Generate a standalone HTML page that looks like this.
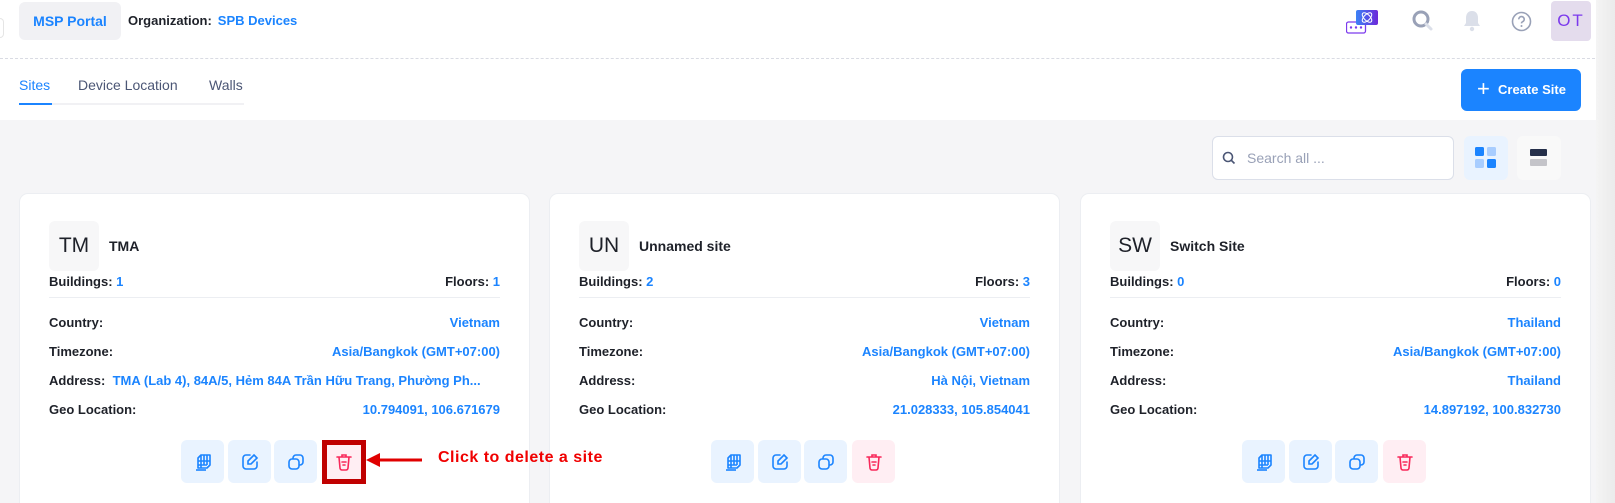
<!DOCTYPE html>
<html><head><meta charset="utf-8"><style>
*{box-sizing:border-box;margin:0;padding:0}
html{width:1615px;height:503px;overflow:hidden}
body{width:1615px;height:503px;overflow:hidden;background:#f5f5f7;font-family:"Liberation Sans",sans-serif;position:relative;color:#1e2129}
.hdr{position:absolute;left:0;top:0;width:1615px;height:120px;background:#fff}
.dash{position:absolute;left:0;top:58px;width:1600px;border-top:1px dashed #d9dbe3}
.msp{position:absolute;left:19px;top:2px;width:102px;height:38px;background:#f1f1f4;border-radius:6px;color:#1b84ff;font-weight:bold;font-size:14px;line-height:38px;text-align:center}
.org{position:absolute;left:128px;top:13px;font-size:13px;font-weight:bold}
.org span{color:#1b84ff;margin-left:6px}
.tab{position:absolute;top:77px;font-size:14px;color:#4b5675}
.tabline{position:absolute;left:19px;top:103px;width:225px;height:2px;background:#f1f1f4}
.tabact{position:absolute;left:19px;top:103px;width:33px;height:2px;background:#1b84ff}
.create{position:absolute;left:1461px;top:69px;width:120px;height:42px;background:#1b84ff;border-radius:6px;color:#fff;font-weight:bold;font-size:13px;line-height:42px;padding-left:37px}
.create:before{content:"+";position:absolute;left:16px;top:-1px;font-size:22px;font-weight:normal}
.avatar{position:absolute;left:1551px;top:1px;width:40px;height:40px;background:#e4dced;border-radius:4px;color:#7c3aed;font-size:17px;line-height:40px;text-align:center;letter-spacing:2px}
.search{position:absolute;left:1212px;top:136px;width:242px;height:44px;background:#fff;border:1px solid #dbdfe9;border-radius:6px;font-size:14px;color:#99a1b7;line-height:42px;padding-left:34px}
.vb{position:absolute;top:136px;width:44px;height:44px;border-radius:6px}
.card{position:absolute;top:193px;width:511px;height:310px;background:#fff;border:1px solid #eceef2;border-bottom:none;border-radius:9px 9px 0 0}
.av{position:absolute;left:29px;top:27px;width:50px;height:50px;background:#f7f7f8;border-radius:6px;font-size:21px;line-height:50px;text-align:center;color:#1e2129}
.name{position:absolute;left:89px;top:44px;font-size:14px;font-weight:bold}
.row{position:absolute;left:29px;right:29px;font-size:13px;font-weight:bold;display:flex;justify-content:space-between;white-space:nowrap}
.row b{color:#1b84ff}
.hr{position:absolute;left:29px;right:29px;top:103px;border-top:1px solid #eceef2}
.btn{position:absolute;top:440px;width:43px;height:43px;border-radius:6px;background:#e9f3ff;display:flex;align-items:center;justify-content:center}
.btn.del{background:#ffeef3}
</style></head><body>
<div class="hdr"></div>
<div style="position:absolute;left:0;top:18px;width:4px;height:20px;border:1px solid #e5e5e5;border-left:none;border-radius:0 4px 4px 0"></div>
<div class="dash"></div>
<div class="msp">MSP Portal</div>
<div class="org">Organization:<span>SPB Devices</span></div>
<div class="tab" style="left:19px;color:#1b84ff">Sites</div>
<div class="tab" style="left:78px">Device Location</div>
<div class="tab" style="left:209px">Walls</div>
<div class="tabline"></div><div class="tabact"></div>
<svg style="position:absolute;left:1346px;top:10px" width="34" height="28" viewBox="0 0 34 28"><rect x="0.5" y="12" width="19" height="11" rx="2" fill="#fff" stroke="#7c3aed" stroke-width="1.3"/><circle cx="5" cy="17.5" r="1.2" fill="#7c3aed"/><circle cx="10" cy="17.5" r="1.2" fill="#7c3aed"/><circle cx="15" cy="17.5" r="1.2" fill="#7c3aed"/><defs><linearGradient id="g" x1="0" x2="1"><stop offset="0" stop-color="#3b82f6"/><stop offset="1" stop-color="#6d28d9"/></linearGradient></defs><rect x="10" y="0" width="22" height="15" rx="2" fill="url(#g)"/><ellipse cx="21" cy="7.5" rx="6" ry="3" fill="none" stroke="#fff" stroke-width="1" transform="rotate(45 21 7.5)"/><ellipse cx="21" cy="7.5" rx="6" ry="3" fill="none" stroke="#fff" stroke-width="1" transform="rotate(-45 21 7.5)"/></svg>
<svg style="position:absolute;left:1412px;top:10px" width="22" height="22" viewBox="0 0 22 22"><circle cx="9" cy="9" r="7" fill="none" stroke="#99a1b7" stroke-width="3"/><path d="M14 14l5 5" stroke="#dbdfe9" stroke-width="3" stroke-linecap="round"/></svg>
<svg style="position:absolute;left:1462px;top:9px" width="20" height="24" viewBox="0 0 20 24"><path d="M10 2c-4 0-6 3-6 7v5l-2 3h16l-2-3V9c0-4-2-7-6-7z" fill="#dbdfe9"/><circle cx="10" cy="20" r="2.2" fill="#dbdfe9"/></svg>
<svg style="position:absolute;left:1511px;top:11px" width="21" height="21" viewBox="0 0 21 21"><circle cx="10.5" cy="10.5" r="9" fill="none" stroke="#99a1b7" stroke-width="1.6"/><path d="M7.8 8.3a2.7 2.7 0 1 1 3.8 2.4c-.8.4-1.1.9-1.1 1.7" fill="none" stroke="#99a1b7" stroke-width="1.6"/><circle cx="10.5" cy="15" r="1" fill="#99a1b7"/></svg>
<div class="avatar">OT</div>
<div class="create">Create Site</div>
<div class="search">Search all ...</div>
<svg style="position:absolute;left:1222px;top:151px" width="14" height="14" viewBox="0 0 14 14"><circle cx="6" cy="6" r="4.5" fill="none" stroke="#4b5675" stroke-width="1.6"/><path d="M9.5 9.5l3 3" stroke="#4b5675" stroke-width="1.6"/></svg>
<div class="vb" style="left:1464px;background:#e9f3ff"><svg width="44" height="44"><rect x="11" y="11" width="9" height="9" rx="1.5" fill="#1b84ff"/><rect x="23" y="11" width="9" height="9" rx="1.5" fill="#a8cdff"/><rect x="11" y="23" width="9" height="9" rx="1.5" fill="#a8cdff"/><rect x="23" y="23" width="9" height="9" rx="1.5" fill="#1b84ff"/></svg></div>
<div class="vb" style="left:1517px;background:#f9f9f9"><svg width="44" height="44"><rect x="13" y="13" width="17" height="7" rx="1" fill="#252f4a"/><rect x="13" y="23" width="17" height="7" rx="1" fill="#c4c4c9"/></svg></div>

<div style="position:absolute;left:1596px;top:0;width:19px;height:503px;background:linear-gradient(90deg,#f4f4f4,#ebebeb);z-index:2"></div>

<div class="card" style="left:19px">
<div class="av">TM</div><div class="name">TMA</div>
<div class="row" style="top:80px"><span>Buildings: <b>1</b></span><span>Floors: <b>1</b></span></div>
<div class="hr"></div>
<div class="row" style="top:121px"><span>Country:</span><b>Vietnam</b></div>
<div class="row" style="top:150px"><span>Timezone:</span><b>Asia/Bangkok (GMT+07:00)</b></div>
<div class="row" style="top:179px;justify-content:flex-start"><span>Address:&nbsp;&nbsp;</span><b>TMA (Lab 4), 84A/5, Hẻm 84A Trần Hữu Trang, Phường Ph...</b></div>
<div class="row" style="top:208px"><span>Geo Location:</span><b>10.794091, 106.671679</b></div>
</div>
<div class="card" style="left:549px">
<div class="av">UN</div><div class="name">Unnamed site</div>
<div class="row" style="top:80px"><span>Buildings: <b>2</b></span><span>Floors: <b>3</b></span></div>
<div class="hr"></div>
<div class="row" style="top:121px"><span>Country:</span><b>Vietnam</b></div>
<div class="row" style="top:150px"><span>Timezone:</span><b>Asia/Bangkok (GMT+07:00)</b></div>
<div class="row" style="top:179px"><span>Address:</span><b>Hà Nội, Vietnam</b></div>
<div class="row" style="top:208px"><span>Geo Location:</span><b>21.028333, 105.854041</b></div>
</div>
<div class="card" style="left:1080px">
<div class="av">SW</div><div class="name">Switch Site</div>
<div class="row" style="top:80px"><span>Buildings: <b>0</b></span><span>Floors: <b>0</b></span></div>
<div class="hr"></div>
<div class="row" style="top:121px"><span>Country:</span><b>Thailand</b></div>
<div class="row" style="top:150px"><span>Timezone:</span><b>Asia/Bangkok (GMT+07:00)</b></div>
<div class="row" style="top:179px"><span>Address:</span><b>Thailand</b></div>
<div class="row" style="top:208px"><span>Geo Location:</span><b>14.897192, 100.832730</b></div>
</div>

<svg width="0" height="0" style="position:absolute"><defs>
<g id="i1" fill="none" stroke="#1b84ff" stroke-width="1.6" stroke-linejoin="round"><path d="M5 16h9l3-3V3H8L5 6z"/><path d="M8 3v13M5 9h12M5 13h9M11 3v10M14 3v10"/><path d="M3 18h10"/></g>
<g id="i2" fill="none" stroke="#1b84ff" stroke-width="1.6" stroke-linecap="round"><path d="M10 3H6a3 3 0 0 0-3 3v8a3 3 0 0 0 3 3h8a3 3 0 0 0 3-3v-4"/><path d="M14 3l3 3-6 6H8V9z"/></g>
<g id="i3" fill="none" stroke="#1b84ff" stroke-width="1.6"><rect x="3" y="7" width="10" height="10" rx="3"/><path d="M7 7V6a3 3 0 0 1 3-3h4a3 3 0 0 1 3 3v4a3 3 0 0 1-3 3h-1"/></g>
<g id="i4" fill="none" stroke="#f8285a" stroke-width="1.6" stroke-linecap="round"><path d="M3 5h14M8 5V3h4v2M5 5l1 11a2 2 0 0 0 2 2h4a2 2 0 0 0 2-2l1-11M8 10h4M9 13h2"/></g>
</defs></svg>

<div class="btn" style="left:181px"><svg width="20" height="20"><use href="#i1"/></svg></div>
<div class="btn" style="left:228px"><svg width="20" height="20"><use href="#i2"/></svg></div>
<div class="btn" style="left:274px"><svg width="20" height="20"><use href="#i3"/></svg></div>
<div class="btn del" style="left:322px;border:5px solid #c00000;border-radius:0;width:44px;height:44px"><svg width="20" height="20"><use href="#i4"/></svg></div>
<div class="btn" style="left:711px"><svg width="20" height="20"><use href="#i1"/></svg></div>
<div class="btn" style="left:758px"><svg width="20" height="20"><use href="#i2"/></svg></div>
<div class="btn" style="left:804px"><svg width="20" height="20"><use href="#i3"/></svg></div>
<div class="btn del" style="left:852px"><svg width="20" height="20"><use href="#i4"/></svg></div>
<div class="btn" style="left:1242px"><svg width="20" height="20"><use href="#i1"/></svg></div>
<div class="btn" style="left:1289px"><svg width="20" height="20"><use href="#i2"/></svg></div>
<div class="btn" style="left:1335px"><svg width="20" height="20"><use href="#i3"/></svg></div>
<div class="btn del" style="left:1383px"><svg width="20" height="20"><use href="#i4"/></svg></div>

<svg style="position:absolute;left:366px;top:452px" width="58" height="16"><path d="M56 8H10" stroke="#e00000" stroke-width="3"/><path d="M0 8l14-7v14z" fill="#e00000"/></svg>
<div style="position:absolute;left:438px;top:449px;font-size:16px;font-weight:bold;color:#f00000;letter-spacing:0.5px">Click to delete a site</div>
</body></html>
